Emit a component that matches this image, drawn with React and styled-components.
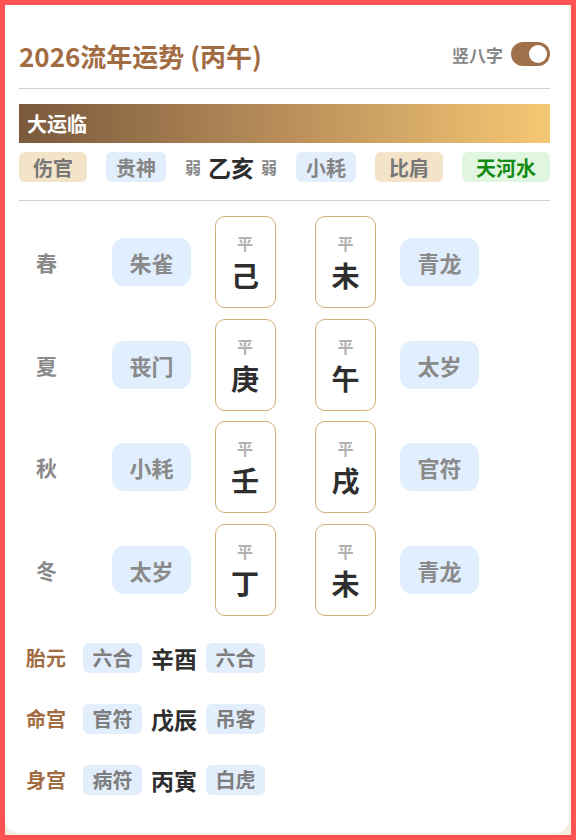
import React from "react";
import styled, { createGlobalStyle } from "styled-components";

const GlobalStyle = createGlobalStyle`
  body {
    margin: 0;
    font-family: "Noto Sans CJK SC", "Noto Sans", sans-serif;
  }
`;

const Frame = styled.div`
  height: 840px;
  box-sizing: border-box;
  border: 5px solid #ff5252;
  background: #f4ede2;
  padding-right: 2px;
  overflow: hidden;
`;

const Card = styled.div`
  height: 828px;
  box-sizing: border-box;
  background: #fff;
  border-radius: 0 0 14px 14px;
  padding: 33px 19px 0 14px;
`;

const Header = styled.div`
  display: flex;
  align-items: center;
  justify-content: space-between;
  height: 36px;
`;

const Title = styled.h1`
  margin: 0;
  font-size: 26px;
  line-height: 36px;
  font-weight: 700;
  color: #a26c43;
`;

const SwitchWrap = styled.div`
  display: flex;
  align-items: center;
  gap: 8px;
  margin-top: -4px;
  font-size: 17px;
  font-weight: 700;
  color: #888;
`;

const Toggle = styled.div`
  position: relative;
  width: 39px;
  height: 24px;
  border-radius: 12px;
  background: #a0704a;

  &::after {
    content: "";
    position: absolute;
    right: 3px;
    top: 3px;
    width: 18px;
    height: 18px;
    border-radius: 50%;
    background: #fff;
  }
`;

const Divider = styled.div`
  height: 1px;
  background: #cfcfcf;
  margin-top: ${(p) => p.$top}px;
`;

const Banner = styled.div`
  margin-top: 15px;
  height: 39px;
  display: flex;
  align-items: center;
  padding-left: 8px;
  background: linear-gradient(90deg, #7a593c 0%, #b98e5a 50%, #f5c874 100%);
  color: #fff;
  font-size: 20px;
  font-weight: 700;
`;

const TagRow = styled.div`
  margin-top: 9px;
  height: 30px;
  display: flex;
  align-items: center;
  justify-content: space-between;
`;

const tagColors = {
  beige: { bg: "#f2e3c9", fg: "#777", pad: 14 },
  blue: { bg: "#e2eefc", fg: "#858585", pad: 10 },
  green: { bg: "#e0f6e0", fg: "#138a13", pad: 14 },
};

const Tag = styled.span`
  height: 30px;
  display: inline-flex;
  align-items: center;
  padding: 0 ${(p) => tagColors[p.$kind].pad}px;
  border-radius: 6px;
  background: ${(p) => tagColors[p.$kind].bg};
  color: ${(p) => tagColors[p.$kind].fg};
  font-size: 20px;
  font-weight: 700;
`;

const Mid = styled.div`
  display: flex;
  align-items: center;
  gap: 7px;
  height: 30px;
`;

const Weak = styled.span`
  font-size: 16px;
  line-height: 30px;
  font-weight: 700;
  color: #888;
`;

const GanZhi = styled.span`
  font-size: 23px;
  line-height: 30px;
  font-weight: 700;
  color: #2e2e2e;
`;

const Grid = styled.div`
  margin-top: 15px;
  padding-left: 17px;
  display: grid;
  grid-template-columns: 76px 102.5px 100.5px 85px 79px;
  row-gap: 10.67px;
  align-items: center;
`;

const Season = styled.div`
  font-size: 21px;
  font-weight: 700;
  color: #8a8a8a;
`;

const GodTag = styled.div`
  width: 79px;
  height: 48px;
  border-radius: 12px;
  background: #e1eefd;
  display: flex;
  align-items: center;
  justify-content: center;
  font-size: 22px;
  font-weight: 700;
  color: #8a8a8a;
`;

const Pillar = styled.div`
  width: 61px;
  height: 92px;
  box-sizing: border-box;
  border: 1px solid #d2ad79;
  border-radius: 10px;
  display: flex;
  flex-direction: column;
  align-items: center;
  justify-content: center;
  padding-top: 2px;
`;

const Level = styled.div`
  font-size: 16px;
  line-height: 20px;
  font-weight: 700;
  color: #b2b2b2;
`;

const Char = styled.div`
  margin-top: 4px;
  font-size: 28px;
  line-height: 36px;
  font-weight: 700;
  color: #2e2e2e;
`;

const Palace = styled.div`
  margin-top: 27px;
  padding-left: 7px;
  display: flex;
  flex-direction: column;
  gap: 31px;
`;

const PalaceRow = styled.div`
  display: flex;
  align-items: center;
  height: 30px;
`;

const PalaceLabel = styled.span`
  width: 41px;
  margin-right: 16px;
  font-size: 20px;
  font-weight: 700;
  color: #a26c43;
`;

const SmallTag = styled.span`
  height: 30px;
  display: inline-flex;
  align-items: center;
  padding: 0 9.5px;
  border-radius: 6px;
  background: #e2eefc;
  color: #7d7d7d;
  font-size: 20px;
  font-weight: 700;
`;

const PalaceGZ = styled.span`
  margin: 0 9px;
  font-size: 23px;
  line-height: 30px;
  font-weight: 700;
  color: #2e2e2e;
`;

const seasons = [
  { s: "春", l: "朱雀", g: "己", z: "未", r: "青龙" },
  { s: "夏", l: "丧门", g: "庚", z: "午", r: "太岁" },
  { s: "秋", l: "小耗", g: "壬", z: "戌", r: "官符" },
  { s: "冬", l: "太岁", g: "丁", z: "未", r: "青龙" },
];

const palaces = [
  { name: "胎元", a: "六合", gz: "辛酉", b: "六合" },
  { name: "命宫", a: "官符", gz: "戊辰", b: "吊客" },
  { name: "身宫", a: "病符", gz: "丙寅", b: "白虎" },
];

export default function App() {
  return (
    <Frame>
      <GlobalStyle />
      <Card>
        <Header>
          <Title>2026流年运势 (丙午)</Title>
          <SwitchWrap>
            竖八字
            <Toggle />
          </SwitchWrap>
        </Header>
        <Divider $top={14} />
        <Banner>大运临</Banner>
        <TagRow>
          <Tag $kind="beige">伤官</Tag>
          <Tag $kind="blue">贵神</Tag>
          <Mid>
            <Weak>弱</Weak>
            <GanZhi>乙亥</GanZhi>
            <Weak>弱</Weak>
          </Mid>
          <Tag $kind="blue">小耗</Tag>
          <Tag $kind="beige">比肩</Tag>
          <Tag $kind="green">天河水</Tag>
        </TagRow>
        <Divider $top={18} />
        <Grid>
          {seasons.map((row) => (
            <React.Fragment key={row.s}>
              <Season>{row.s}</Season>
              <GodTag>{row.l}</GodTag>
              <Pillar>
                <Level>平</Level>
                <Char>{row.g}</Char>
              </Pillar>
              <Pillar>
                <Level>平</Level>
                <Char>{row.z}</Char>
              </Pillar>
              <GodTag>{row.r}</GodTag>
            </React.Fragment>
          ))}
        </Grid>
        <Palace>
          {palaces.map((p) => (
            <PalaceRow key={p.name}>
              <PalaceLabel>{p.name}</PalaceLabel>
              <SmallTag>{p.a}</SmallTag>
              <PalaceGZ>{p.gz}</PalaceGZ>
              <SmallTag>{p.b}</SmallTag>
            </PalaceRow>
          ))}
        </Palace>
      </Card>
    </Frame>
  );
}
